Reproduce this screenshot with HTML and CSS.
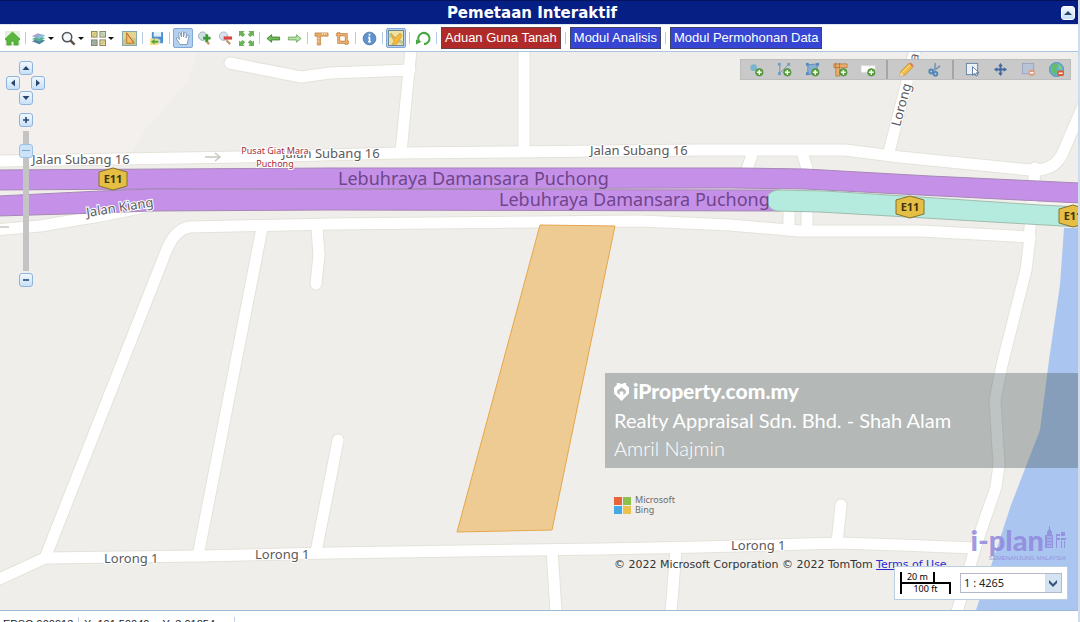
FILE: index.html
```html
<!DOCTYPE html>
<html lang="ms">
<head>
    <meta charset="utf-8">
    <title>Pemetaan Interaktif</title>
    <link rel="stylesheet" href="styles.css">
</head>
<body>
<div class="viewer">
    <header class="titlebar">
        <h1>Pemetaan Interaktif</h1>
        <button class="mini-btn collapse" aria-label="Collapse"><svg viewBox="0 0 12 12"><path d="M2 8l4-4 4 4z"/></svg></button>
    </header>

    <div class="toolbar">
        <button class="tool" aria-label="Home"><svg viewBox="0 0 16 16"><rect width="16" height="16" fill="#e3f1dc"/><path d="M0 8.500L8 1l8 7.500-1.500 1.500L14 9.500V15h-4.500v-4h-3v4H2V9.500l-.5.500z" fill="#58b63a" stroke="#3c9426" stroke-width=".6"/></svg></button>
        <span class="sep"></span>
        <button class="tool drop" aria-label="Layers"><svg viewBox="0 0 16 16"><path d="M1 11l6-3 8 2-6 4z" fill="#4f7f9e"/><path d="M1 8.500l6-3 8 2-6 4z" fill="#55b08c"/><path d="M1 5.500l6-3 8 2-6 4z" fill="#a9a4cf"/><path d="M6 6l5-2 4 1-6 3z" fill="#7cc7d8"/></svg><i class="caret"></i></button>
        <button class="tool drop" aria-label="Search"><svg viewBox="0 0 16 16"><path d="M10 10l4.500 4.500" stroke="#5d4d45" stroke-width="2.600"/><circle cx="6.500" cy="6.500" r="5" fill="#f4f8fb" stroke="#4e5357" stroke-width="1.600"/></svg><i class="caret"></i></button>
        <button class="tool drop" aria-label="Base maps"><svg viewBox="0 0 16 16"><g stroke="#8a8462"><rect x=".5" y=".5" width="6" height="6" fill="#e6d184"/><rect x="9.500" y=".5" width="6" height="6" fill="#c9dcc2"/><rect x=".5" y="9.500" width="6" height="6" fill="#9db0ac"/><rect x="9.500" y="9.500" width="6" height="6" fill="#e8d595"/></g><path d="M2 5l3-3M11 2l3 3M2 11l3 3M11 14l3-3" stroke="#a3ab79"/></svg><i class="caret"></i></button>
        <button class="tool" aria-label="Map sketch"><svg viewBox="0 0 16 16"><rect x=".5" y=".5" width="15" height="15" fill="#e4d58c" stroke="#7fa5ae"/><path d="M1 10l5-4 9 2v7H1z" fill="#c9c489"/><path d="M5 2v11h8z" fill="#f0c16a" stroke="#b0762f"/><path d="M5 2l7 10" stroke="#d4663c"/></svg></button>
        <span class="sep"></span>
        <button class="tool" aria-label="Save view"><svg viewBox="0 0 16 16"><rect x="3" y="1" width="12" height="12" rx="1" fill="#4b8fd0"/><rect x="5" y="1" width="8" height="5" fill="#e4f0fa"/><rect x="6" y="9" width="6" height="4" fill="#cfdff0"/><rect x="1" y="8" width="9" height="7" fill="#f2e08d"/><path d="M2 11.500l4-3v2h4v2H6v2z" fill="#55a83d"/></svg></button>
        <span class="sep"></span>
        <button class="tool pressed" aria-label="Pan"><svg viewBox="0 0 16 16"><path d="M5 14.500L1.500 9q-.5-1.500 1-1.500L4.500 9.500 3.500 3.500q.5-1.500 1.500-.5L6.500 7V2q1-1.500 2 0v5l1-4.500q1.500-1 1.800.500L11 8l1.500-3q1.500-.5 1.500 1L12 14.500z" fill="#fff" stroke="#6f8fae" stroke-width=".8"/></svg></button>
        <button class="tool" aria-label="Zoom in"><svg viewBox="0 0 16 16"><path d="M9 10l4 4" stroke="#c39a72" stroke-width="2.500"/><circle cx="6" cy="5.500" r="4.500" fill="#d0dfe3" stroke="#9bb2b0"/><path d="M6.500 7.500h8M10.500 3.500v8" stroke="#3c9a35" stroke-width="3"/></svg></button>
        <button class="tool" aria-label="Zoom out"><svg viewBox="0 0 16 16"><path d="M9 10l4 4" stroke="#c39a72" stroke-width="2.500"/><circle cx="6" cy="5.500" r="4.500" fill="#d9e2ec" stroke="#a9b6c6"/><path d="M6 7.500h9" stroke="#db4545" stroke-width="3.400"/></svg></button>
        <button class="tool" aria-label="Full extent"><svg viewBox="0 0 16 16"><g fill="#6cb257"><path d="M0 0h6L4.500 1.500l2 2.500L4 6.500l-2.500-2L0 6z"/><path d="M16 0h-6l1.500 1.500-2 2.500L12 6.500l2.500-2L16 6z"/><path d="M0 16h6l-1.500-1.500 2-2.500L4 9.500l-2.500 2L0 10z"/><path d="M16 16h-6l1.500-1.500-2-2.500L12 9.500l2.500 2L16 10z"/></g></svg></button>
        <span class="sep"></span>
        <button class="tool" aria-label="Previous view"><svg viewBox="0 0 16 16"><path d="M1 8l5-4v2.500h8.500v3H6V12z" fill="#6fc057" stroke="#4a7f3c"/></svg></button>
        <button class="tool" aria-label="Next view"><svg viewBox="0 0 16 16"><path d="M15 8l-5-4v2.500H1.500v3H10V12z" fill="#b5e3a4" stroke="#79a96e"/></svg></button>
        <span class="sep"></span>
        <button class="tool" aria-label="Measure length"><svg viewBox="0 0 16 16"><path d="M1 2h14v3.500H7V15H3.500V5.500H1z" fill="#e6a868" stroke="#bf7a3c" stroke-width=".7"/><path d="M9 2v2M11 2v2M13 2v2M3.500 8h2M3.500 11h2" stroke="#fae3c3"/></svg></button>
        <button class="tool" aria-label="Measure area"><svg viewBox="0 0 16 16"><path d="M4 1v11h11M1 4h11v11" fill="none" stroke="#bf7a3c" stroke-width="3"/><path d="M4 1v11h11M1 4h11v11" fill="none" stroke="#eaaf72" stroke-width="1.600"/></svg></button>
        <span class="sep"></span>
        <button class="tool" aria-label="Information"><svg viewBox="0 0 16 16"><circle cx="8" cy="8" r="6.800" fill="#5f93cd" stroke="#48719f" stroke-width=".8"/><path d="M8 3v2M6.500 7H8v4.500M6.500 11.500h3" fill="none" stroke="#fff" stroke-width="1.700"/></svg></button>
        <span class="sep"></span>
        <button class="tool pressed" aria-label="Edit features"><svg viewBox="0 0 16 16"><rect x=".5" y=".5" width="15" height="15" fill="#ece2a4" stroke="#6e8b94"/><path d="M1 5l14 8" stroke="#b4c99c" stroke-width="3"/><path d="M3 3l4 5 5-5 2 2-3 6-2 3-5 .5 2-3z" fill="#f4b73a" stroke="#c8953c" stroke-width=".6"/></svg></button>
        <span class="sep"></span>
        <button class="tool" aria-label="Refresh"><svg viewBox="0 0 16 16"><path d="M3.500 11.500A6 6 0 1 1 8.500 14" fill="none" stroke="#4aa644" stroke-width="2.200"/><path d="M0 14.500V9l6 2.500z" fill="#4aa644"/></svg></button>
        <span class="sep"></span>
        <button class="module report">Aduan Guna Tanah</button>
        <span class="sep"></span>
        <button class="module">Modul Analisis</button>
        <span class="sep"></span>
        <button class="module">Modul Permohonan Data</button>
    </div>

    <main class="map">
        <svg class="tiles" viewBox="0 52 1080 558" preserveAspectRatio="xMinYMin slice">
            <rect y="52" width="1080" height="558" fill="#efeeea"/>
            <path d="M0 52H198L188 82 145 130 130 155H0z" fill="#f3f0ed"/>
            <path d="M1064 228H1080V610H976L993 560 1011 505 1040 430 1049 360 1060 285z" fill="#aac6f0"/>

            <!-- local roads, casing first and white fill on top -->
            <g class="road casing">
                <path id="r1" d="M230 63L301 77 330 73 410 70"/>
                <path id="r2" d="M411 50L401 152M524 50V150M915 50L889 152"/>
                <path id="r3" d="M-5 161L240 157 400 153 700 150H845L900 157 1030 170Q1056 172 1064 150L1083 106"/>
                <path id="r4" d="M752 155L746 172M803 155L808 172M789 208V230M807 210V230M1035 168L1029 240"/>
                <path id="r5" d="M-5 230L40 226 100 216 160 204"/>
                <path id="r6" d="M-5 581L45 558 165 254Q174 229 190 227L330 224 540 222 640 221 730 225 800 231 920 231 1030 237"/>
                <path id="r7" d="M262 228L198 556M317 228L319 255 316 284M338 440L316 552M552 550L556 612M676 550L671 612M841 505L837 543"/>
                <path id="r8" d="M45 558L200 556 330 553 600 549 700 547 840 543 900 545 975 548"/>
                <path id="r9" d="M1030 237L1026 270 1002 365 995 400 999 465 996 487 976 545 957 612"/>
            </g>
            <g class="road">
                <use href="#r1"/><use href="#r2"/><use href="#r3"/><use href="#r4"/><use href="#r5"/>
                <use href="#r6"/><use href="#r7"/><use href="#r8"/><use href="#r9"/>
            </g>

            <!-- expressway -->
            <path d="M-2 195L100 190 330 188 1080 203V207L780 191 0 197z" fill="#f7f3ee"/>
            <path class="highway" d="M-2 170L330 168 740 168 805 169 930 176 1080 183V203L920 195 805 189 730 188 150 189-2 190z"/>
            <path class="highway" d="M-2 196L100 191 150 189 780 190 780 211 330 210 150 211 100 213-2 216z"/>
            <path class="toll" d="M777 190L825 191 920 197 1040 205 1080 207V227L1010 223 890 216 820 212 777 211Q767 209 767 200 767 192 777 190z"/>
            <path d="M205 157h15M215 153l5 4-5 4M0 227h9" fill="none" stroke="#c9c8bd" stroke-width="1.500"/>

            <path class="parcel" d="M540 225L615 226 552 530 457 532z"/>

            <g class="street">
                <text x="32" y="164">Jalan Subang 16</text>
                <text x="282" y="158">Jalan Subang 16</text>
                <text x="590" y="155">Jalan Subang 16</text>
                <text transform="translate(87 217) rotate(-9)">Jalan Kiang</text>
                <text x="104" y="563">Lorong 1</text>
                <text x="255" y="559">Lorong 1</text>
                <text x="731" y="550">Lorong 1</text>
                <text transform="translate(900 127) rotate(-75)">Lorong Kota</text>
            </g>
            <g class="expressway">
                <text x="338" y="185">Lebuhraya Damansara Puchong</text>
                <text x="499" y="206">Lebuhraya Damansara Puchong</text>
            </g>
            <g class="place">
                <text x="275" y="154">Pusat Giat Mara</text>
                <text x="275" y="167">Puchong</text>
            </g>
            <g class="shield">
                <path d="M113 168l14 4v14l-14 4-14-4v-14z"/><text x="113" y="183">E11</text>
                <path d="M910 196l14 4v14l-14 4-14-4v-14z"/><text x="910" y="211">E11</text>
                <path d="M1073 205l14 4v14l-14 4-14-4v-14z"/><text x="1073" y="220">E11</text>
            </g>
        </svg>

        <div class="navigator">
            <button class="mini-btn" aria-label="Pan up"><svg viewBox="0 0 12 12"><path d="M2.500 8L6 4l3.500 4z"/></svg></button>
            <div class="pan-row">
                <button class="mini-btn" aria-label="Pan left"><svg viewBox="0 0 12 12"><path d="M8 2.500L4 6l4 3.500z"/></svg></button>
                <button class="mini-btn" aria-label="Pan right"><svg viewBox="0 0 12 12"><path d="M4 2.500L8 6 4 9.500z"/></svg></button>
            </div>
            <button class="mini-btn" aria-label="Pan down"><svg viewBox="0 0 12 12"><path d="M2.500 4L6 8l3.500-4z"/></svg></button>
            <button class="mini-btn zoom-in" aria-label="Zoom in one level"><svg viewBox="0 0 12 12"><path d="M5.200 3h1.600v2.200H9v1.600H6.800V9H5.200V6.800H3V5.200h2.200z"/></svg></button>
            <input class="zoom-slider" type="range" min="0" max="20" value="18" aria-label="Zoom level">
            <button class="mini-btn" aria-label="Zoom out one level"><svg viewBox="0 0 12 12"><path d="M3 5.200h6v1.600H3z"/></svg></button>
        </div>

        <div class="drawbar">
            <button aria-label="Draw point"><svg viewBox="0 0 16 16"><circle cx="5" cy="6" r="3.500" fill="#78b4cf"/><use href="#plus"/></svg></button>
            <button aria-label="Draw line"><svg viewBox="0 0 16 16"><path d="M3 3v9L12 3" fill="none" stroke="#7394ad"/><g fill="#6f9fc6"><rect x="1" y="1" width="3" height="3"/><rect x="1" y="11" width="3" height="3"/><rect x="11" y="1" width="3" height="3"/></g><use href="#plus"/></svg></button>
            <button aria-label="Draw polygon"><svg viewBox="0 0 16 16"><path d="M3 3l10-1v11H3z" fill="#86afd4" stroke="#668eb7"/><g fill="#5588bd"><rect x="1" y="1" width="3" height="3"/><rect x="12" y="1" width="3" height="3"/><rect x="1" y="11" width="3" height="3"/></g><use href="#plus"/></svg></button>
            <button aria-label="Draw with measurements"><svg viewBox="0 0 16 16"><path d="M1 2h14v4H7v9H3V6H1z" fill="#e9ad6d" stroke="#b77435" stroke-width=".8"/><path d="M3 1v5h4V1" fill="none" stroke="#b77435"/><path d="M8 9h7v5H8z" fill="#b9cda7"/><use href="#plus"/></svg></button>
            <button aria-label="Add label"><svg viewBox="0 0 16 16"><rect x="0" y="4" width="15" height="7" fill="#fff" stroke="#ddd"/><use href="#plus"/></svg></button>
            <span class="divider"></span>
            <button aria-label="Edit shape"><svg viewBox="0 0 16 16"><path d="M1 15l1-5 9-9 4 4-9 9z" fill="#f2bd43" stroke="#b47d2e" stroke-width=".7"/><path d="M11 2l1.500-1.500 3 3L14 5z" fill="#d9776c"/><path d="M1 15l1-4 3 3z" fill="#f7e2bd"/><path d="M4 11l8-8" stroke="#ffe391"/></svg></button>
            <button aria-label="Cut shape"><svg viewBox="0 0 16 16"><path d="M9 1l-1 8M14 4l-6 5" stroke="#7a9ab4" stroke-width="1.800"/><g fill="none" stroke="#4f86ba" stroke-width="2"><circle cx="4.500" cy="10" r="2"/><circle cx="9" cy="12.500" r="2"/></g></svg></button>
            <span class="divider"></span>
            <button aria-label="Select"><svg viewBox="0 0 16 16"><rect x="1.500" y="1.500" width="12" height="12" fill="#eaf0f6" stroke="#6482a3"/><path d="M8 5v9l2.500-2 1.500 3 1.500-1-1.500-2.500h3z" fill="#fff" stroke="#4c6b91" stroke-width=".9"/></svg></button>
            <button aria-label="Move"><svg viewBox="0 0 16 16"><path d="M8 1l2.500 3.500H9V7h2.500V5.500L15 8l-3.500 2.500V9H9v2.500h1.500L8 15l-2.500-3.500H7V9H4.500v1.500L1 8l3.500-2.500V7H7V4.500H5.500z" fill="#42699b"/></svg></button>
            <button aria-label="Delete selection"><svg viewBox="0 0 16 16"><rect x="1.500" y="1.500" width="12" height="11" fill="#b9c3d6" stroke="#98a6bf"/><circle cx="11.500" cy="11.500" r="3.500" fill="#dd9b82"/><path d="M9.500 11.500h4" stroke="#fff" stroke-width="1.500"/></svg></button>
            <button aria-label="Clear map"><svg viewBox="0 0 16 16"><circle cx="8" cy="8" r="7.500" fill="#65afd8" stroke="#5a91a7"/><path d="M3 4l4-3 3 3-3 3 3 3-3 4-4-4z" fill="#63bd69"/><path d="M10 2l4 4-2 3-2-3z" fill="#84cd79"/><rect x="9" y="9" width="7" height="6" rx="2" fill="#da5a3c"/><path d="M10.500 12h4" stroke="#fff" stroke-width="1.500"/></svg></button>
        </div>

        <div class="agent">
            <div class="brand">
                <svg viewBox="0 0 16 20"><path fill-rule="evenodd" d="M3 1h2l3 1 3-1h2v2l3 3v6l-8 8-8-8V6l3-3zM8 5.500L3.500 9v2.500L6 14v-4h4v4l2.500-2.500V9z" fill="#fff"/></svg>
                <span>iProperty.com.my</span>
            </div>
            <div class="agency">Realty Appraisal Sdn. Bhd. - Shah Alam</div>
            <div class="person">Amril Najmin</div>
        </div>

        <div class="provider">
            <svg viewBox="0 0 17 17"><path d="M0 0h8v8H0z" fill="#e76538"/><path d="M9 0h8v8H9z" fill="#8cc04b"/><path d="M0 9h8v8H0z" fill="#45a9e4"/><path d="M9 9h8v8H9z" fill="#edc14f"/></svg>
            <span>Microsoft<br>Bing</span>
        </div>

        <div class="iplan">
            <div class="iplan-name">i-plan<svg viewBox="0 0 22 28"><path d="M1 22V9h2V6l2-3V0h1v3l2 3v3h1v13zM12 8h4v2h-3v2h3v2h-3v8h-1zM17 6h4v4h-4zM17 12h5v2h-5zM17 15h1v7h-1zM20 15h1v7h-1z" fill="#8f8bdc"/><path d="M3 11h5M3 14h5M3 17h5M3 20h5" stroke="#aac6f0"/></svg></div>
            <div class="iplan-sub">SEMENANJUNG MALAYSIA</div>
        </div>

        <div class="attribution">© 2022 Microsoft Corporation © 2022 TomTom <a href="#">Terms of Use</a>,</div>

        <div class="scalebox">
            <div class="scaleline">
                <div class="metric">20 m</div>
                <div class="imperial">100 ft</div>
            </div>
            <div class="scale-select">
                <select aria-label="Map scale">
                    <option>1 : 4265</option>
                </select>
                <svg viewBox="0 0 16 18"><path d="M4 6l4 4 4-4v3l-4 4-4-4z" fill="#355277"/></svg>
            </div>
        </div>
    </main>

    <footer class="status">
        <span class="crs">EPSG:900913</span>
        <span class="coords"><span>X: 101.59040</span><span>Y: 3.01854</span></span>
    </footer>
</div>

<svg class="defs">
    <defs>
        <g id="plus"><circle cx="11" cy="11" r="4" fill="#5ba23e" stroke="#43802c" stroke-width=".6"/><path d="M8.500 11h5M11 8.500v5" stroke="#fff" stroke-width="1.500"/></g>
    </defs>
</svg>
</body>
</html>
```

FILE: styles.css
```css
* { box-sizing: border-box; }
body { margin: 0; overflow: hidden; font-family: "Liberation Sans", Arial, sans-serif; }
button { padding: 0; border: 0; background: none; font: inherit; }
svg { display: block; }
.defs { position: absolute; width: 0; height: 0; }

.viewer { height: 100vh; overflow: hidden; border-right: 2px solid #cfdcec; }

/* title */
.titlebar { display: flex; align-items: center; height: 24px; padding-right: 3px; background: #061f84; border-top: 1px solid #04125c; }
.titlebar h1 { flex: 1; margin: 0; padding-left: 3px; text-align: center; color: #fff; font: bold 15px/22px "DejaVu Sans", Verdana, sans-serif; }

.mini-btn { display: flex; align-items: center; justify-content: center; flex: none; width: 14px; height: 14px; border: 1px solid #8fb4dc; border-radius: 3px; background: linear-gradient(#f1f8ff, #c8e0f8); }
.mini-btn svg { width: 12px; height: 12px; fill: #29496c; }
.collapse { border-color: #fff; }

/* main toolbar */
.toolbar { display: flex; align-items: center; gap: 1px; height: 28px; padding-left: 2px; background: #fff; border-top: 1px solid #dbe6f3; border-bottom: 1px solid #a9c3e0; }
.tool { display: flex; align-items: center; justify-content: center; width: 20px; height: 20px; }
.tool svg { width: 15px; height: 15px; }
.tool.drop { width: 29px; padding-left: 2px; justify-content: flex-start; gap: 2px; }
.tool.pressed { background: #b4d0ef; border: 1px solid #82a9d6; border-radius: 2px; }
.tool.pressed svg { width: 16px; height: 16px; }
.caret { border: 3px solid transparent; border-top: 3px solid #111; border-bottom: 0; }
.sep { width: 1px; height: 12px; margin: 0 2px; background: #b5cbe3; }
.module { height: 22px; margin: 0 1px; padding: 0 3px; border: 1px solid #3c4468; background: #3646d2; color: #fff; font-size: 13px; line-height: 20px; white-space: nowrap; }
.module.report { background: #b02a2a; border-color: #6d4048; }

/* map */
.map { position: relative; height: calc(100vh - 64px); overflow: hidden; background: #efeeea; }
.tiles { width: 100%; height: 100%; }
.road { fill: none; stroke: #fff; stroke-width: 11px; stroke-linecap: round; stroke-linejoin: round; }
.casing { stroke: #e5e2da; stroke-width: 13px; }
.highway { fill: #c591e8; stroke: #a687b5; }
.toll { fill: #b5ebdf; stroke: #9fbcae; }
.parcel { fill: #efcb94; stroke: #e5a64b; }
.tiles text { font-family: "Noto Sans", sans-serif; }
.street text { font-size: 13px; fill: #5b595b; stroke: #fff; stroke-width: 2px; paint-order: stroke; }
.expressway text { font-size: 18px; fill: #70458c; }
.place text { font-size: 9px; fill: #a62a37; stroke: #fff; stroke-width: 2px; paint-order: stroke; text-anchor: middle; }
.shield path { fill: #e4bf43; stroke: #87712f; stroke-width: 1px; }
.shield text { font-size: 11px; font-weight: bold; fill: #40340f; text-anchor: middle; }

.navigator { position: absolute; left: 6px; top: 9px; width: 39px; display: flex; flex-direction: column; align-items: center; }
.pan-row { align-self: stretch; display: flex; justify-content: space-between; margin: 1px 0; }
.zoom-in { margin-top: 8px; }
.zoom-slider { -webkit-appearance: none; appearance: none; writing-mode: vertical-lr; direction: rtl; width: 14px; height: 140px; margin: 4px 0 2px; background: linear-gradient(#c4c4c4, #c4c4c4) center / 6px 100% no-repeat; }
.zoom-slider::-webkit-slider-thumb { -webkit-appearance: none; width: 14px; height: 14px; border: 1px solid #9cc2ea; border-radius: 3px; background: linear-gradient(#7da7d3, #7da7d3) center / 8px 1px no-repeat, #cde3f8; }

.drawbar { position: absolute; right: 7px; top: 7px; display: flex; align-items: center; height: 21px; padding-left: 1px; background: #c9c9c9; border: 1px solid #bdbdbd; }
.drawbar button { display: flex; justify-content: center; width: 28px; }
.drawbar svg { width: 15px; height: 15px; }
.divider { width: 2px; height: 19px; margin: 0 4px; background: #a5a5a5; }

.agent { position: absolute; left: 605px; right: 0; top: 321px; padding: 3px 9px 6px; background: rgba(74, 88, 92, 0.36); color: #fff; font: 20px/28px Lato, sans-serif; white-space: nowrap; }
.brand { display: flex; align-items: center; gap: 4px; font-size: 21px; line-height: 30px; font-weight: 900; }
.brand svg { width: 15px; height: 19px; }
.person { font-weight: 300; }

.provider { position: absolute; left: 614px; top: 443px; display: flex; align-items: center; gap: 4px; font: 9px/10px "Noto Sans", sans-serif; color: #6c6c6c; }
.provider svg { width: 17px; height: 17px; }

.iplan { position: absolute; right: 12px; top: 472px; color: #9189dc; opacity: 0.85; }
.iplan-name { display: flex; align-items: center; font: 900 29px/32px Lato, sans-serif; }
.iplan-name svg { width: 22px; height: 28px; }
.iplan-sub { text-align: right; font-size: 6px; line-height: 4px; }

.attribution { position: absolute; left: 614px; top: 506px; font: 11px/14px "DejaVu Sans", Verdana, sans-serif; color: #333; white-space: nowrap; }
.attribution a { color: #2b2bd0; }

.scalebox { position: absolute; right: 10px; bottom: 10px; display: flex; align-items: center; gap: 9px; padding: 5px; background: #fff; border: 1px solid #b9cde3; font: 9px/10px "Noto Sans", sans-serif; color: #000; }
.scaleline { width: 51px; text-align: center; }
.metric { width: 35px; border: 2px solid #000; border-top: 0; border-bottom: 0; }
.imperial { border: 2px solid #000; border-bottom: 0; }
.scale-select { position: relative; width: 102px; }
.scale-select select { -webkit-appearance: none; appearance: none; display: block; width: 100%; height: 20px; padding: 0 3px; border: 1px solid #b5b8c8; border-radius: 0; background: #fff; color: #222; font: 11px/18px "Noto Sans", Tahoma, sans-serif; }
.scale-select svg { position: absolute; right: 1px; top: 1px; width: 16px; height: 18px; background: #d5e2f1; pointer-events: none; }

/* status */
.status { display: flex; align-items: center; padding: 3px 3px 0; height: 24px; background: #fff; border-top: 1px solid #99bbd8; font-size: 11px; line-height: 14px; color: #222; }
.crs { width: 76px; border-right: 1px solid #c3d2e2; }
.coords { display: flex; gap: 13px; width: 156px; padding-left: 5px; border-right: 1px solid #c3d2e2; }
```
